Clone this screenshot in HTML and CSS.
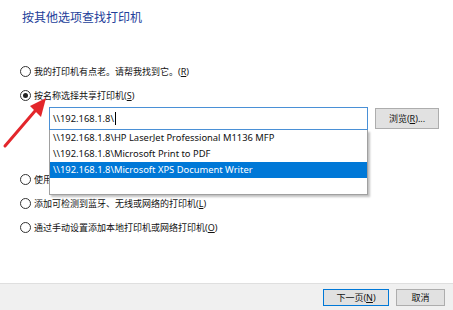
FILE: index.html
```html
<!DOCTYPE html>
<html lang="zh-CN">
<head>
  <meta charset="UTF-8"/>
  <title>添加打印机</title>
  <link rel="stylesheet" href="styles.css">
</head>
<body>

<div class="dialog">
  <div class="content">
    <h1 class="title">按其他选项查找打印机</h1>

    <div class="option"><span class="radio"></span>我的打印机有点老。请帮我找到它。(<u>R</u>)</div>
    <div class="option option-on"><span class="radio checked"></span>按名称选择共享打印机(<u>S</u>)</div>

    <div class="share-row">
      <div class="combo">
        <div class="combo-input">\\192.168.1.8\<span class="caret"></span></div>
        <!-- 自动补全列表 -->
        <ul class="suggest">
          <li>\\192.168.1.8\HP LaserJet Professional M1136 MFP</li>
          <li>\\192.168.1.8\Microsoft Print to PDF</li>
          <li class="active">\\192.168.1.8\Microsoft XPS Document Writer</li>
        </ul>
      </div>
      <button class="btn btn-browse">浏览(<u>R</u>)...</button>
    </div>

    <div class="option option-ip"><span class="radio"></span>使用 TCP/IP 地址或主机名添加打印机(<u>I</u>)</div>
    <div class="option"><span class="radio"></span>添加可检测到蓝牙、无线或网络的打印机(<u>L</u>)</div>
    <div class="option"><span class="radio"></span>通过手动设置添加本地打印机或网络打印机(<u>O</u>)</div>
  </div>

  <div class="footer">
    <button class="btn btn-default">下一页(<u>N</u>)</button>
    <button class="btn">取消</button>
  </div>

  <!-- 红色标注箭头 -->
  <svg class="arrow" width="50" height="56" viewBox="0 95 50 56">
    <line x1="5" y1="146" x2="35" y2="111" stroke="#e3262b" stroke-width="3" stroke-linecap="round"/>
    <polygon points="46,98 30,106 41,117" fill="#e3262b"/>
  </svg>
</div>

</body>
</html>
```

FILE: styles.css
```css
body {
  margin: 0;
  background: #fff;
  font-family: "Noto Sans", "Noto Sans CJK SC", sans-serif;
  font-size: 9px;
  color: #111;
}
.dialog {
  position: relative;
  width: 453px;
  height: 310px;
  display: flex;
  flex-direction: column;
  overflow: hidden;
}
.content {
  flex: 1;
  padding: 10px 0 0 20px;
}
.title {
  margin: 0 0 37px 2px;
  font-size: 12px;
  line-height: 16px;
  font-weight: normal;
  color: #23409a;
}
.option {
  display: flex;
  align-items: center;
  height: 16px;
  margin-bottom: 8px;
  white-space: nowrap;
}
.option-on {
  margin-bottom: 4px;
}
.option-ip {
  margin-top: 41px;
}
.radio {
  width: 9px;
  height: 9px;
  border: 1px solid #333;
  border-radius: 50%;
  margin-right: 3px;
  display: flex;
  align-items: center;
  justify-content: center;
}
.radio.checked::after {
  content: "";
  width: 5px;
  height: 5px;
  border-radius: 50%;
  background: #222;
}
.share-row {
  display: flex;
  align-items: flex-start;
  gap: 7px;
  margin-left: 29px;
}
.combo {
  position: relative;
  width: 319px;
}
.combo-input {
  height: 21px;
  border: 1px solid #4a90d6;
  padding-left: 3px;
  display: flex;
  align-items: center;
  font-size: 9.4px;
}
.caret {
  display: inline-block;
  width: 1px;
  height: 13px;
  background: #000;
  margin-left: 1px;
}
.suggest {
  position: absolute;
  top: 100%;
  left: 0;
  width: 317px;
  height: 64px;
  margin: 0;
  padding: 0;
  list-style: none;
  background: #fff;
  border: 1px solid #a0a0a0;
  border-top: none;
  box-shadow: 2px 2px 2px rgba(0,0,0,0.25);
  font-size: 9.4px;
}
.suggest li {
  height: 16px;
  line-height: 16px;
  padding-left: 3px;
}
.suggest li.active {
  background: #0078d7;
  color: #fff;
}
.btn {
  font-family: inherit;
  font-size: 9px;
  background: #e1e1e1;
  border: 1px solid #adadad;
  color: #111;
  padding: 0;
  height: 17px;
}
.btn-browse {
  width: 64px;
  height: 21px;
  margin-top: 1px;
}
.footer {
  height: 27px;
  background: #f0f0f0;
  border-top: 1px solid #dfdfdf;
  display: flex;
  justify-content: flex-end;
  align-items: flex-start;
  gap: 7px;
  padding: 5px 8px 0 0;
  box-sizing: border-box;
}
.footer .btn {
  width: 49px;
}
.footer .btn-default {
  width: 66px;
  border-color: #0078d7;
}
.arrow {
  position: absolute;
  left: 0;
  top: 95px;
}
```
